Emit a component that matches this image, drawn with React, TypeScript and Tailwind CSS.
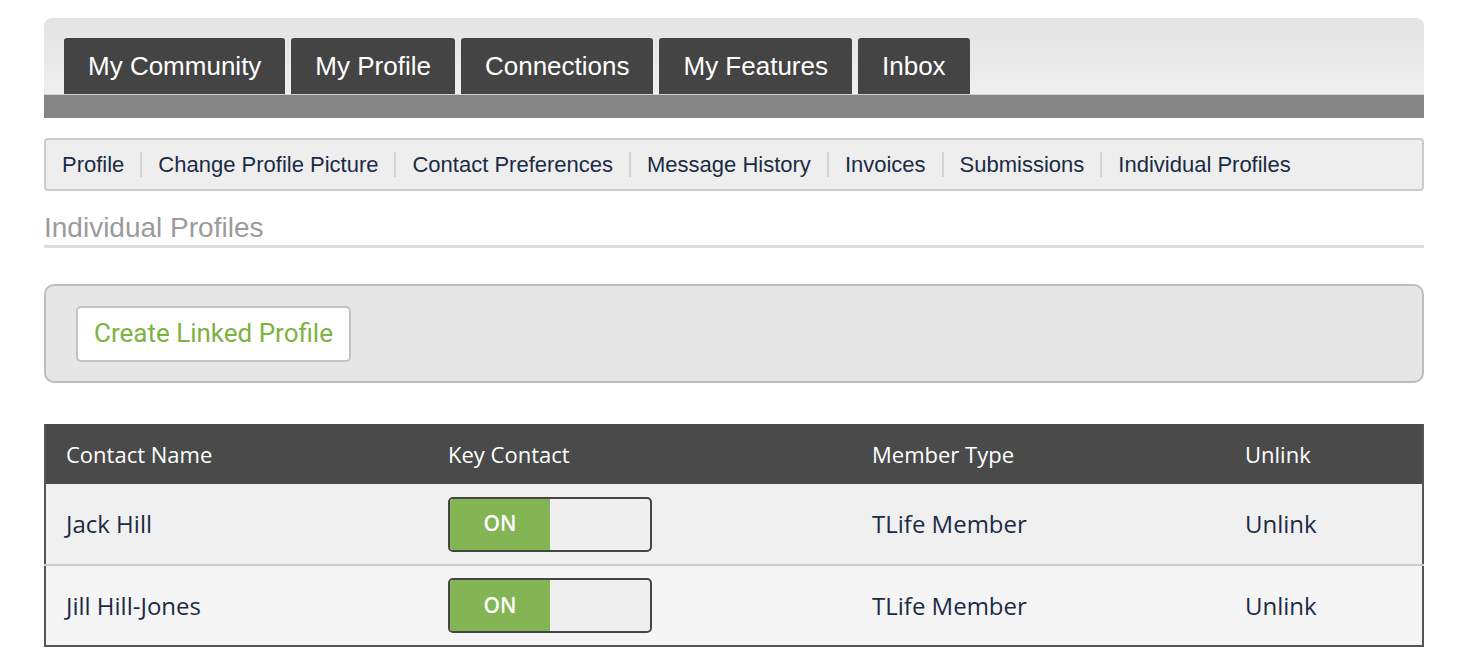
const tabs = ['My Community', 'My Profile', 'Connections', 'My Features', 'Inbox']
const subLinks = ['Profile', 'Change Profile Picture', 'Contact Preferences', 'Message History', 'Invoices', 'Submissions', 'Individual Profiles']
const contacts = [
  { name: 'Jack Hill', type: 'TLife Member', bg: 'bg-[#f0f0f0]' },
  { name: 'Jill Hill-Jones', type: 'TLife Member', bg: 'bg-[#f5f5f5]' },
]

function Toggle() {
  return (
    <div className="flex h-[55px] w-[204px] overflow-hidden rounded-[5px] border-2 border-[#454545] bg-[#efefef]">
      <div className="flex w-[100px] items-center justify-center bg-[#84b555] text-[21px] font-semibold text-white">ON</div>
    </div>
  )
}

export default function App() {
  return (
    <div className="min-h-screen bg-white px-[44px] pt-[18px] font-['Liberation_Sans',Arial,sans-serif] w-[1460px]">
      {/* main tabs */}
      <div className="w-[1380px] rounded-t-[8px] bg-gradient-to-b from-[#e3e3e3] to-[#f3f3f3]">
        <div className="flex gap-[6px] pl-[20px] pt-[20px]">
          {tabs.map((t) => (
            <div key={t} className="flex h-[56px] items-center rounded-t-[3px] bg-[#444444] px-[24px] text-[26px] text-white">
              {t}
            </div>
          ))}
        </div>
        <div className="h-[24px] border-t border-[#cfcfcf] bg-[#868686]" />
      </div>

      {/* sub nav */}
      <div className="mt-[20px] flex h-[53px] w-[1380px] items-center rounded-[4px] border-2 border-[#cccccc] bg-[#eeeeee] pl-[16px] text-[22px] text-[#1b2b45]">
        {subLinks.map((l, i) => (
          <div key={l} className="flex items-center">
            {i > 0 && <div className="mx-[16px] h-[25px] w-[2px] bg-[#d2d2d2]" />}
            <span>{l}</span>
          </div>
        ))}
      </div>

      {/* heading */}
      <div className="mt-[21px] w-[1380px] border-b-[3px] border-[#dddddd] pb-[1px] text-[28px] leading-[32px] text-[#9b9b9b]">
        Individual Profiles
      </div>

      {/* action panel */}
      <div className="mt-[36px] flex h-[99px] w-[1380px] items-center rounded-[10px] border-2 border-[#bdbdbd] bg-[#e6e6e6] px-[30px]">
        <button className="h-[56px] rounded-[5px] border-2 border-[#c2c2c2] bg-white px-[16px] font-['Roboto',sans-serif] text-[26px] text-[#7cb342]">
          Create Linked Profile
        </button>
      </div>

      {/* contacts table */}
      <table className="mt-[41px] w-[1378px] table-fixed border-collapse border-x-2 border-b-2 border-[#555555] font-['Open_Sans',sans-serif] text-[24px]">
        <colgroup>
          <col className="w-[382px]" />
          <col className="w-[424px]" />
          <col className="w-[373px]" />
          <col className="w-[199px]" />
        </colgroup>
        <thead>
          <tr className="h-[60px] bg-[#4a4a4a] text-left text-[22px] text-white">
            <th className="pl-[20px] font-normal">Contact Name</th>
            <th className="pl-[21px] font-normal">Key Contact</th>
            <th className="pl-[21px] font-normal">Member Type</th>
            <th className="pl-[21px] font-normal">Unlink</th>
          </tr>
        </thead>
        <tbody className="text-[#1b2b45]">
          {contacts.map((c, i) => (
            <tr key={c.name} className={`${c.bg} ${i > 0 ? 'border-t-2 border-[#cccccc]' : ''}`}>
              <td className="h-[81px] pl-[20px]">{c.name}</td>
              <td className="pl-[21px]">
                <Toggle />
              </td>
              <td className="pl-[21px]">{c.type}</td>
              <td className="pl-[21px]">Unlink</td>
            </tr>
          ))}
        </tbody>
      </table>
    </div>
  )
}
